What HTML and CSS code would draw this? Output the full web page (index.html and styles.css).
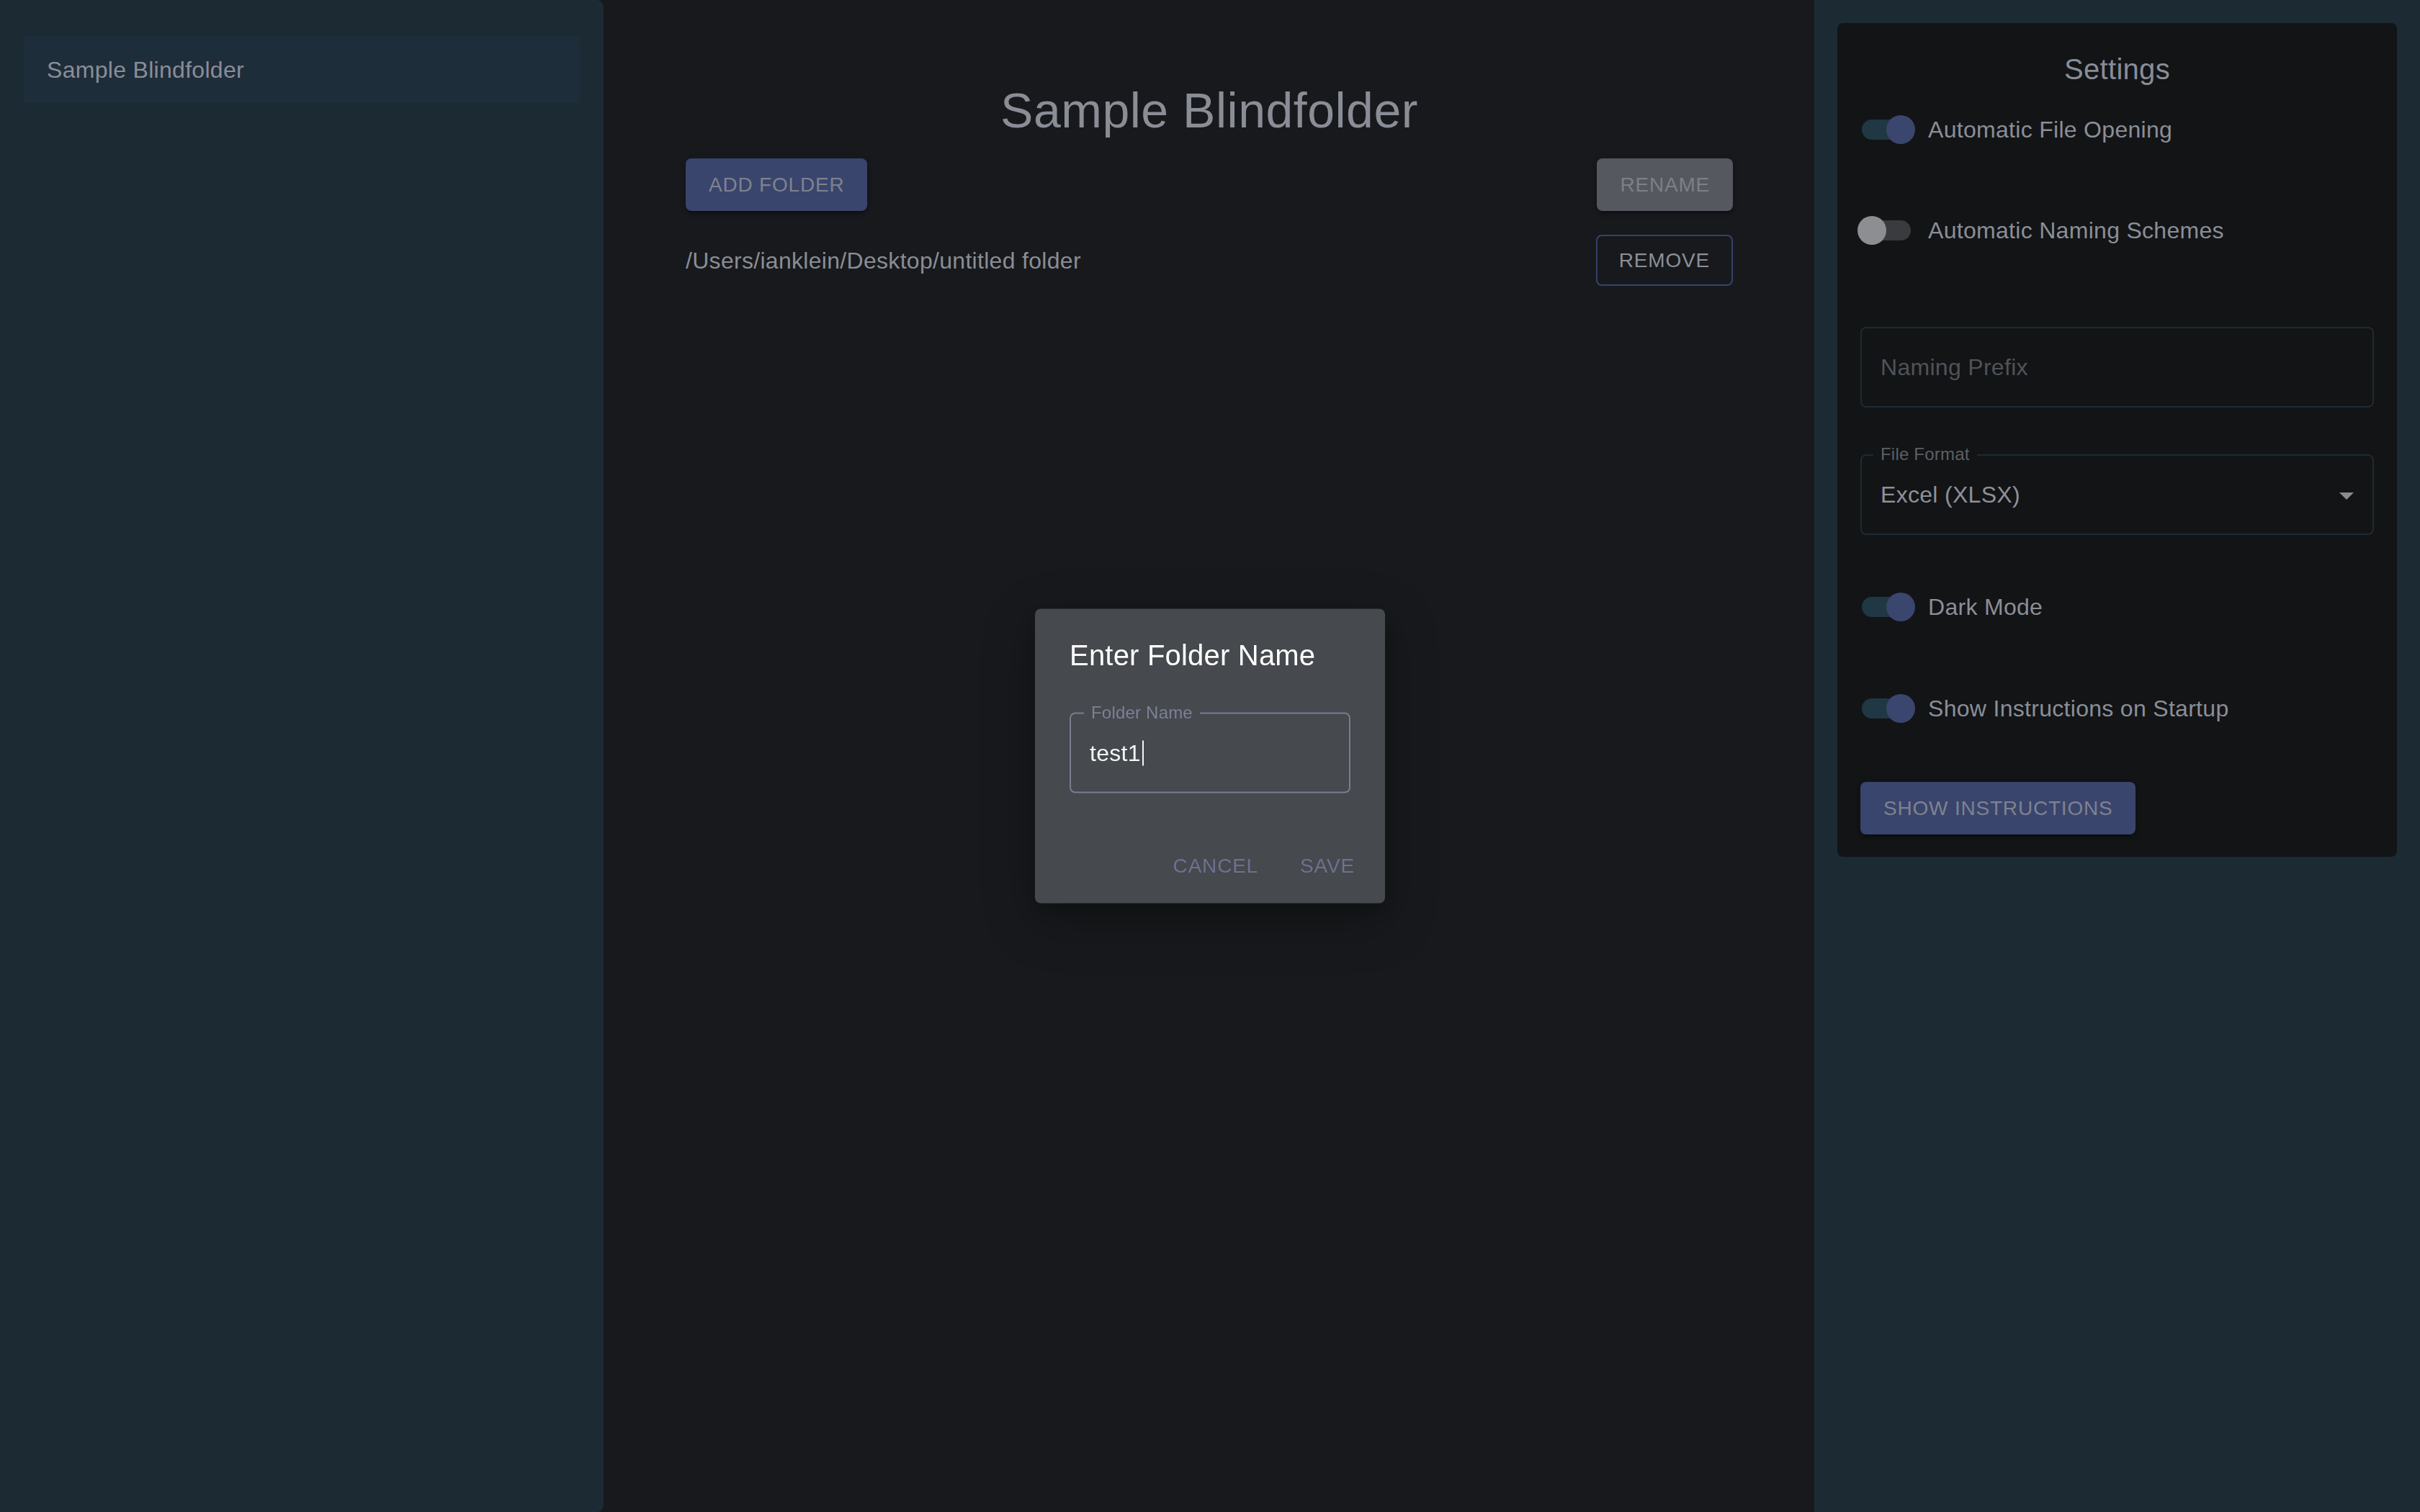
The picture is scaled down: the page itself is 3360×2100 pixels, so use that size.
FILE: index.html
```html
<!DOCTYPE html>
<html lang="en">
<head>
<meta charset="utf-8">
<title>Blindfolder</title>
<link rel="stylesheet" href="styles.css">
</head>
<body>
<div class="app">
  <aside class="sidebar">
    <div class="folder-item"><span>Sample Blindfolder</span></div>
  </aside>

  <main class="workspace">
    <h1 class="page-title">Sample Blindfolder</h1>
    <div class="toolbar">
      <button class="btn btn-contained">Add Folder</button>
      <button class="btn btn-grey">Rename</button>
    </div>
    <div class="path-row">
      <span class="path-text">/Users/ianklein/Desktop/untitled folder</span>
      <button class="btn btn-outlined">Remove</button>
    </div>
  </main>

  <aside class="settings-panel">
    <section class="settings-card">
      <h2 class="settings-title">Settings</h2>

      <div class="switch-row row-1">
        <span class="switch on"><span class="track"></span><span class="thumb"></span></span>
        <span class="switch-label">Automatic File Opening</span>
      </div>

      <div class="switch-row row-2">
        <span class="switch"><span class="track"></span><span class="thumb"></span></span>
        <span class="switch-label">Automatic Naming Schemes</span>
      </div>

      <div class="text-field prefix-field">
        <span class="placeholder">Naming Prefix</span>
      </div>

      <div class="text-field select-field">
        <span class="field-label dark-label">File Format</span>
        <span class="select-value">Excel (XLSX)</span>
        <svg class="select-arrow" viewBox="0 0 24 24" width="48" height="48"><path d="M7 10l5 5 5-5z"/></svg>
      </div>

      <div class="switch-row row-3">
        <span class="switch on"><span class="track"></span><span class="thumb"></span></span>
        <span class="switch-label">Dark Mode</span>
      </div>

      <div class="switch-row row-4">
        <span class="switch on"><span class="track"></span><span class="thumb"></span></span>
        <span class="switch-label">Show Instructions on Startup</span>
      </div>

      <button class="btn btn-contained show-btn">Show Instructions</button>
    </section>
  </aside>
</div>

<div class="dialog" role="dialog">
  <h3 class="dialog-title">Enter Folder Name</h3>
  <div class="dialog-content">
    <div class="text-field focus-field">
      <span class="field-label">Folder Name</span>
      <span class="input-value">test1<span class="caret"></span></span>
    </div>
  </div>
  <div class="dialog-actions">
    <button class="btn btn-text">Cancel</button>
    <button class="btn btn-text">Save</button>
  </div>
</div>
</body>
</html>
```

FILE: styles.css
```css
* { box-sizing: border-box; }

html, body {
  margin: 0;
  padding: 0;
  width: 3360px;
  height: 2100px;
  overflow: hidden;
  background: #17191c;
  font-family: "Liberation Sans", Arial, sans-serif;
  color: #8b8e97;
}

.app {
  display: flex;
  width: 3360px;
  height: 2100px;
}

/* ---------- left sidebar ---------- */
.sidebar {
  width: 838px;
  flex: none;
  background: #1c2b33;
  border-radius: 0 9px 9px 0;
  padding: 50px 33px 0 33px;
}

.folder-item {
  height: 93px;
  display: flex;
  align-items: center;
  padding: 0 32px;
  background: #1e2d3a;
  font-size: 32px;
  line-height: 48px;
  letter-spacing: 0.3px;
  color: #8a8d97;
}

/* ---------- main workspace ---------- */
.workspace {
  flex: 1;
  padding: 111px 113px 0 114px;
  display: flex;
  flex-direction: column;
}

.page-title {
  margin: 0;
  font-size: 68px;
  line-height: 84px;
  font-weight: 400;
  text-align: center;
  color: #8a8c96;
  letter-spacing: 0.5px;
}

.toolbar {
  margin-top: 25px;
  display: flex;
  justify-content: space-between;
  align-items: center;
}

.path-row {
  margin-top: 33px;
  display: flex;
  justify-content: space-between;
  align-items: center;
}

.path-text {
  font-size: 32px;
  line-height: 48px;
  letter-spacing: 0.3px;
  color: #8a8d96;
}

/* ---------- buttons ---------- */
.btn {
  font-family: "Liberation Sans", Arial, sans-serif;
  font-size: 28px;
  line-height: 49px;
  letter-spacing: 0.8px;
  text-transform: uppercase;
  border: none;
  border-radius: 8px;
  padding: 12px 32px;
  margin: 0;
  cursor: pointer;
  white-space: nowrap;
}

.btn-contained {
  background: #39456d;
  color: #7f828f;
  box-shadow: 0 6px 2px -4px rgba(0,0,0,0.2), 0 4px 4px 0 rgba(0,0,0,0.14), 0 2px 10px 0 rgba(0,0,0,0.12);
}

.btn-grey {
  background: #55585e;
  color: #7d8088;
  box-shadow: 0 6px 2px -4px rgba(0,0,0,0.2), 0 4px 4px 0 rgba(0,0,0,0.14), 0 2px 10px 0 rgba(0,0,0,0.12);
}

.btn-outlined {
  background: transparent;
  border: 2px solid #36426a;
  padding: 9px 30px;
  color: #8c8f98;
}

.btn-text {
  background: transparent;
  color: #6c7290;
  padding: 12px 16px;
  min-width: 128px;
}

/* ---------- settings panel ---------- */
.settings-panel {
  width: 841px;
  flex: none;
  background: #1c2b33;
  padding: 32px;
}

.settings-card {
  background: #121416;
  border-radius: 8px;
  padding: 32px 32px 31px 32px;
  display: flex;
  flex-direction: column;
}

.settings-title {
  margin: 0;
  font-size: 40px;
  line-height: 64px;
  font-weight: 400;
  text-align: center;
  color: #8a8c96;
  letter-spacing: 0.3px;
}

.switch-row {
  height: 76px;
  display: flex;
  align-items: center;
  margin-left: -22px;
}
.row-1 { margin-top: 14px; }
.row-2 { margin-top: 64px; }
.row-3 { margin-top: 62px; }
.row-4 { margin-top: 65px; }

.show-btn {
  align-self: flex-start;
  margin-top: 64px;
}

.switch {
  width: 116px;
  height: 76px;
  flex: none;
  display: grid;
  align-items: center;
  justify-items: start;
}
.switch > .track,
.switch > .thumb {
  grid-area: 1 / 1;
}
.track {
  margin-left: 24px;
  width: 68px;
  height: 28px;
  border-radius: 14px;
  background: #3a3b3e;
}
.thumb {
  margin-left: 18px;
  width: 40px;
  height: 40px;
  border-radius: 50%;
  background: #8c8e92;
}
.switch.on .track { background: #1f3843; }
.switch.on .thumb { margin-left: 58px; background: #3a466e; }

.switch-label {
  font-size: 32px;
  line-height: 48px;
  letter-spacing: 0.3px;
  color: #8b8e97;
}

/* ---------- text fields ---------- */
.text-field {
  position: relative;
  height: 112px;
  border: 2px solid #1d2c33;
  border-radius: 8px;
  display: flex;
  align-items: center;
  padding: 0 26px;
}

.prefix-field { margin-top: 96px; }
.select-field { margin-top: 65px; justify-content: space-between; padding-right: 12px; }

.placeholder {
  font-size: 32px;
  line-height: 48px;
  letter-spacing: 0.3px;
  color: #4f5358;
}

.select-value {
  font-size: 32px;
  line-height: 48px;
  letter-spacing: 0.3px;
  color: #8e9097;
}

.select-arrow {
  fill: #8a8c92;
  flex: none;
  margin-top: 2px;
}

.field-label {
  position: absolute;
  left: 16px;
  top: -14px;
  padding: 0 10px;
  font-size: 24px;
  line-height: 24px;
  letter-spacing: 0.2px;
  color: #7c8197;
  background: #46494d;
}
.dark-label {
  background: #121416;
  color: #5c6065;
}

/* ---------- dialog ---------- */
.dialog {
  position: fixed;
  left: 50%;
  top: 50%;
  transform: translate(-50%, -50%);
  width: 486px;
  background: #46494d;
  border-radius: 8px;
  box-shadow: 0 22px 70px 6px rgba(0,0,0,0.22), 0 10px 30px rgba(0,0,0,0.2);
  display: flex;
  flex-direction: column;
}

.dialog-title {
  margin: 0;
  padding: 32px 48px;
  font-size: 40px;
  line-height: 64px;
  font-weight: 400;
  color: #ffffff;
  letter-spacing: 0.2px;
}

.dialog-content {
  padding: 0 48px 40px 48px;
}

.focus-field {
  margin: 16px 0 8px 0;
  border-color: #787d93;
  padding: 0 26px;
}
.focus-field .field-label { left: 18px; }

.input-value {
  font-size: 32px;
  line-height: 48px;
  letter-spacing: 0.3px;
  color: #f4f4f5;
  display: inline-flex;
  align-items: center;
}

.caret {
  display: inline-block;
  width: 2px;
  height: 35px;
  margin-left: 2px;
  background: #f4f4f5;
}

.dialog-actions {
  display: flex;
  justify-content: flex-end;
  gap: 16px;
  padding: 16px;
}
```
